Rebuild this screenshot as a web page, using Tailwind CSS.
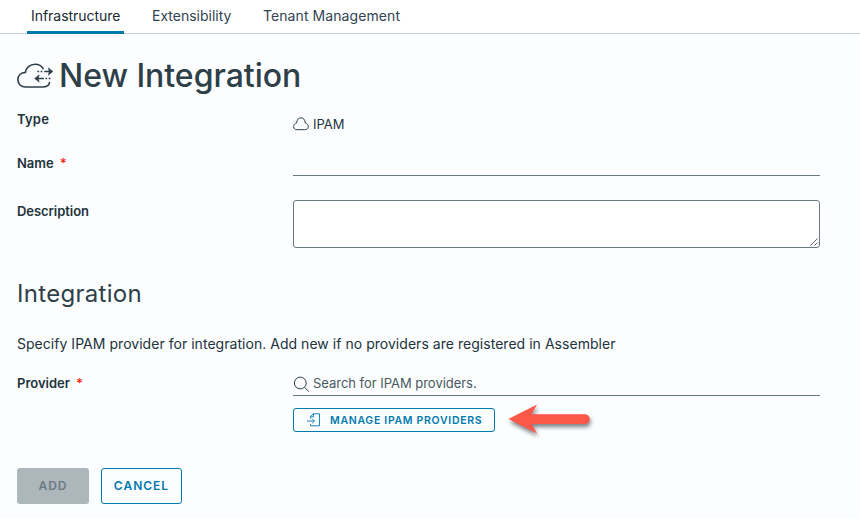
<!DOCTYPE html>
<html lang="en">
<head>
<meta charset="utf-8">
<title>New Integration</title>
<script src="https://cdn.jsdelivr.net/npm/@tailwindcss/browser@4"></script>
</head>
<body class="h-[519px] overflow-hidden bg-[#fcfdff] font-['Inter','Liberation_Sans',sans-serif] text-[13px] text-[#21333b]">
<nav class="flex h-[34px] border-b border-[#cccfd3] bg-white pl-[27px] text-[14px] leading-[32px] whitespace-nowrap text-[#314351]">
  <a class="h-[34px] w-[97px] border-b-3 border-[#0079ad] pl-1 text-[#1b2a32]"><span class="tracking-[-0.03px]">Infrastructure</span></a>
  <a class="ml-7 w-[111px]"><span>Extensibility</span></a>
  <a><span class="tracking-[0.08px]">Tenant Management</span></a>
</nav>
<main class="px-[17px]">
  <h1 class="flex h-[70px] items-center pt-[13px] text-[32px] leading-[38px] font-medium whitespace-nowrap text-[#2d4048]">
    <svg class="mr-[6px] h-[26px] w-[36px] shrink-0" viewBox="0 0 36 26" fill="none" stroke="#2d4048" stroke-width="1.6">
      <path d="M26.5 6C24.6 2.9 21.8 1.2 18.1 1.2C12.8 1.2 8.9 4.8 8.4 9.4C4 9.7.9 12.6.9 16.7C.9 21.1 4.1 24 8.5 24H26.4C30.5 24 32.8 21.5 32.5 18.8"/>
      <path d="M27.2 8.5H34.5M27 15.5H18.8"/>
      <path d="M31.3 4.8L35.9 8.5L31.3 12.2L32.2 8.5ZM22.2 11.8L17.6 15.5L22.2 19.2L21.3 15.5Z" fill="#2d4048" stroke-width=".5"/>
      <path d="M20.4 8.5H26M28.5 15.5H34" stroke-dasharray="1.7 1.5"/>
    </svg>
    <span class="tracking-[-0.03px]">New Integration</span>
  </h1>
  <section class="grid grid-cols-[276px_527px]">
    <div class="h-[42px] pt-[7px] leading-4 font-semibold"><span class="tracking-[0.2px]">Type</span></div>
    <div class="flex h-[42px] items-start pt-[12px] leading-4">
      <svg class="mt-[1px] mr-1 h-[14px] w-[16px]" viewBox="0 0 16 14" fill="none" stroke="#2d4048"><path d="M3.6 6C4 2.7 5.5.8 8 .8C10.5.8 12 2.7 12.3 6C14.4 6.6 15.5 8.1 15.3 9.9C15.1 11.9 13.5 12.7 11.7 12.7H4.2C2 12.7.7 11.5.7 9.7C.7 7.7 1.7 6.5 3.6 6Z"/></svg>
      <span>IPAM</span>
    </div>
    <div class="h-[54px] pt-[9px] leading-4 font-semibold"><span>Name</span><span class="ml-[6px] text-[#f52a10]">*</span></div>
    <div class="h-[54px]"><div class="h-[30px] border-b border-[#6a7a81]"></div></div>
    <div class="pt-[3px] leading-4 font-semibold"><span class="tracking-[-0.05px]">Description</span></div>
    <div class="relative h-[48px] rounded-[3px] border border-[#6a7a81] bg-white">
      <svg class="absolute right-0 bottom-0 h-[10px] w-[10px]" viewBox="0 0 10 10" fill="none" stroke="#68686b"><path d="M1.5 8.5L8.5 1.5M5.5 8.5L8.5 5.5"/></svg>
    </div>
  </section>
  <h2 class="mt-[31px] h-[30px] text-[24px] leading-[30px] whitespace-nowrap text-[#2d4048]"><span class="tracking-[0.3px]">Integration</span></h2>
  <p class="mt-[25px] h-5 text-[14px] leading-5 whitespace-nowrap"><span class="tracking-[0.034px]">Specify IPAM provider for integration. Add new if no providers are registered in Assembler</span></p>
  <section class="mt-[18px] grid grid-cols-[276px_527px]">
    <div class="pt-[3px] leading-4 font-semibold"><span>Provider</span><span class="ml-[6px] text-[#f52a10]">*</span></div>
    <div>
      <div class="flex h-[24px] items-center border-b border-[#6a7a81] whitespace-nowrap text-[#475961]">
        <svg class="mr-[3px] h-4 w-[17px]" viewBox="0 0 17 16" fill="none" stroke="#2d4048"><circle cx="7.3" cy="7" r="5.9"/><path d="M11.5 11.3L15.8 15.5"/></svg>
        <span class="tracking-[-0.03px]">Search for IPAM providers.</span>
      </div>
      <button class="mt-[12px] flex h-[24px] w-[202px] items-center rounded-[3px] border border-[#0079ad] pl-[13px] text-[10.5px] font-semibold whitespace-nowrap text-[#0079ad]">
        <svg class="mr-[9px] h-[14px] w-[14px]" viewBox="0 0 14 14" fill="none" stroke="#0079ad" stroke-width=".9"><path d="M3.5 5.5V3.5L6.3.8H12.5V12.8H3.5V11M3.5 3.8H6.5V.8M0 8H7.5M5.2 5.7L7.5 8L5.2 10.3"/></svg>
        <span class="pt-px tracking-[0.7px]">MANAGE IPAM PROVIDERS</span>
      </button>
    </div>
  </section>
  <div class="mt-9 flex gap-3 text-[12px] font-semibold tracking-[1px]">
    <button class="h-9 w-[72px] rounded-[3px] bg-[#adb6bb] text-[#6b7b82]"><span>ADD</span></button>
    <button class="h-9 w-[81px] rounded-[3px] border border-[#0079ad] text-[#0079ad]"><span>CANCEL</span></button>
  </div>
</main>
<svg class="absolute top-[398px] left-[502px] h-[46px] w-[98px] drop-shadow-[1px_3px_2px_rgba(0,0,0,0.5)]" viewBox="0 0 98 46" fill="#fb5849"><path d="M6.5 21L35 6.5L29.5 16.2H82.5C89.5 16.2 89.5 26 82.5 26H29.5L35 35.5Z"/></svg>
</body>
</html>
